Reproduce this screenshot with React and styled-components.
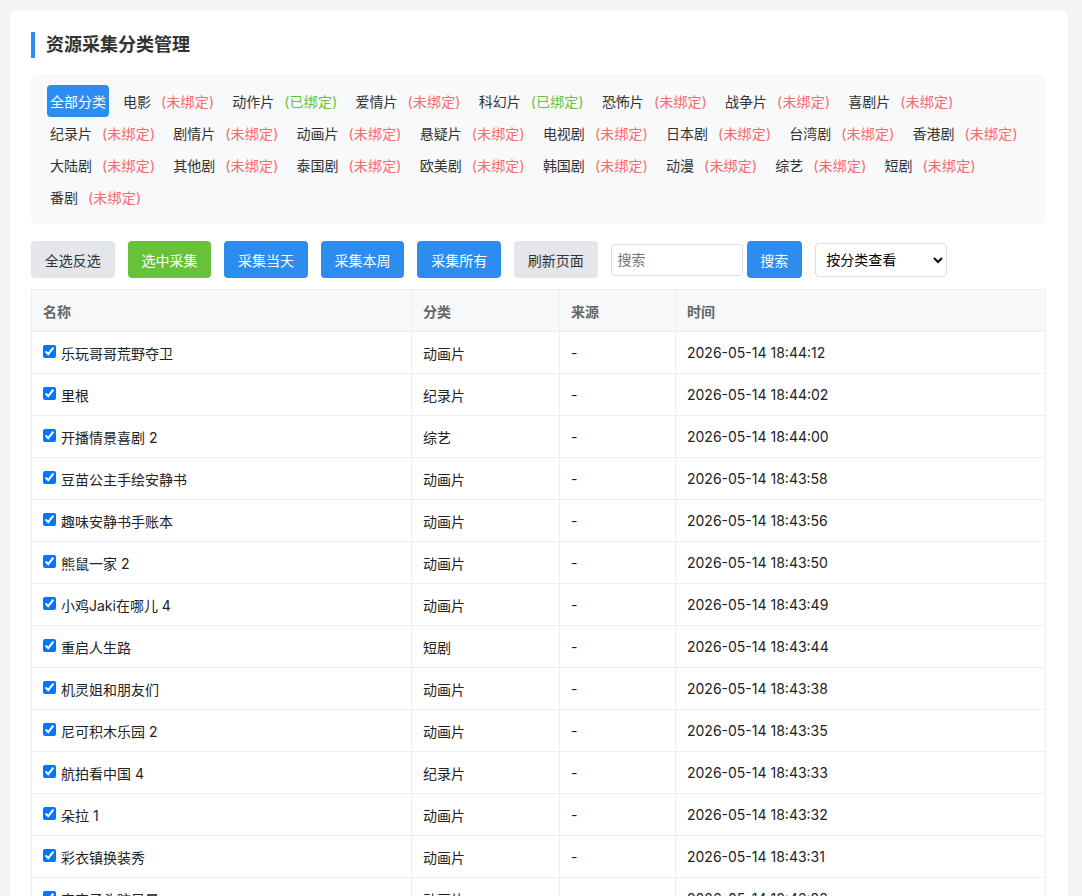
import React from 'react';
import styled, { createGlobalStyle } from 'styled-components';

const GlobalStyle = createGlobalStyle`
  * { box-sizing: border-box; }
  html, body { margin: 0; height: 896px; overflow: hidden; }
  body {
    background: #f3f4f6;
    font-family: Inter, "Noto Sans CJK SC", sans-serif;
    font-size: 14px;
    color: #333;
  }
`;

const Page = styled.div`
  padding: 10px 14px 0 10px;
`;
const Card = styled.div`
  background: #fff;
  border-radius: 8px;
  padding: 22px 23px 20px 21px;
`;
const Title = styled.h2`
  margin: 0 0 16px;
  height: 26px;
  line-height: 26px;
  padding-left: 11px;
  border-left: 4px solid #2d8cf0;
  font-size: 18px;
  font-weight: 700;
  color: #333;
`;
const FilterBox = styled.div`
  display: flex;
  flex-wrap: wrap;
  align-content: flex-start;
  background: #f8f9fa;
  border-radius: 6px;
  padding: 11px 12px 10px 16px;
  height: 150px;
`;
const FilterItem = styled.a`
  display: inline-flex;
  align-items: center;
  height: 32px;
  margin-right: ${(p) => (p.$active ? '11px' : '12px')};
  padding: 0 3px;
  border-radius: 4px;
  font-size: 14px;
  white-space: nowrap;
  color: ${(p) => (p.$active ? '#fff' : '#333')};
  background: ${(p) => (p.$active ? '#2d8cf0' : 'transparent')};
`;
const Status = styled.span`
  margin-left: 10px;
  letter-spacing: 0.2px;
  color: ${(p) => (p.$bound ? '#67c23a' : '#f56c6c')};
`;
const Toolbar = styled.div`
  display: flex;
  align-items: center;
  gap: 13px;
  margin: 17px 0 11px;
`;
const Button = styled.button`
  height: 37px;
  padding: 0 13.8px;
  border: 0;
  border-radius: 4px;
  font: inherit;
  white-space: nowrap;
  color: ${(p) => (p.$kind === 'gray' ? '#333' : '#fff')};
  background: ${(p) =>
    p.$kind === 'green' ? '#67c23a' : p.$kind === 'gray' ? '#e4e6eb' : '#2d8cf0'};
`;
const SearchGroup = styled.div`
  display: flex;
  align-items: center;
  gap: 4px;
`;
const SearchInput = styled.input`
  width: 132px;
  height: 32px;
  padding: 0 6px;
  border: 1px solid #ddd;
  border-radius: 4px;
  font: inherit;
  &::placeholder { color: #757575; }
`;
const Select = styled.select`
  width: 132px;
  height: 34px;
  padding: 0 6px;
  border: 1px solid #ddd;
  border-radius: 4px;
  background: #fff;
  color: #000;
  font: inherit;
`;
const Table = styled.table`
  width: 1014px;
  table-layout: fixed;
  border-collapse: collapse;
`;
const Th = styled.th`
  height: 42px;
  padding: 0 11px;
  border: 1px solid #eee;
  background: #f7f8fa;
  color: #666;
  font-size: 14px;
  font-weight: 700;
  text-align: left;
`;
const Td = styled.td`
  height: 42px;
  padding: 0 11px;
  border: 1px solid #eee;
  color: #222;
  white-space: nowrap;
`;
const NameCell = styled.label`
  display: flex;
  align-items: center;
  gap: 5px;
`;
const Check = styled.input`
  width: 13px;
  height: 13px;
  margin: -3px 0 0 0;
  accent-color: #0075ff;
`;

const categories = [
  ['电影', 0], ['动作片', 1], ['爱情片', 0], ['科幻片', 1], ['恐怖片', 0], ['战争片', 0], ['喜剧片', 0],
  ['纪录片', 0], ['剧情片', 0], ['动画片', 0], ['悬疑片', 0], ['电视剧', 0], ['日本剧', 0], ['台湾剧', 0], ['香港剧', 0],
  ['大陆剧', 0], ['其他剧', 0], ['泰国剧', 0], ['欧美剧', 0], ['韩国剧', 0], ['动漫', 0], ['综艺', 0], ['短剧', 0],
  ['番剧', 0],
];

const rows = [
  ['乐玩哥哥荒野夺卫', '动画片', '2026-05-14 18:44:12'],
  ['里根', '纪录片', '2026-05-14 18:44:02'],
  ['开播情景喜剧 2', '综艺', '2026-05-14 18:44:00'],
  ['豆苗公主手绘安静书', '动画片', '2026-05-14 18:43:58'],
  ['趣味安静书手账本', '动画片', '2026-05-14 18:43:56'],
  ['熊鼠一家 2', '动画片', '2026-05-14 18:43:50'],
  ['小鸡Jaki在哪儿 4', '动画片', '2026-05-14 18:43:49'],
  ['重启人生路', '短剧', '2026-05-14 18:43:44'],
  ['机灵姐和朋友们', '动画片', '2026-05-14 18:43:38'],
  ['尼可积木乐园 2', '动画片', '2026-05-14 18:43:35'],
  ['航拍看中国 4', '纪录片', '2026-05-14 18:43:33'],
  ['朵拉 1', '动画片', '2026-05-14 18:43:32'],
  ['彩衣镇换装秀', '动画片', '2026-05-14 18:43:31'],
  ['宝宝子头脑风暴', '动画片', '2026-05-14 18:43:23'],
];

export default function App() {
  return (
    <Page>
      <GlobalStyle />
      <Card>
        <Title>资源采集分类管理</Title>
        <FilterBox>
          <FilterItem $active>全部分类</FilterItem>
          {categories.map(([name, bound]) => (
            <FilterItem key={name}>
              {name}
              <Status $bound={bound}>{bound ? '(已绑定)' : '(未绑定)'}</Status>
            </FilterItem>
          ))}
        </FilterBox>
        <Toolbar>
          <Button $kind="gray">全选反选</Button>
          <Button $kind="green">选中采集</Button>
          <Button>采集当天</Button>
          <Button>采集本周</Button>
          <Button>采集所有</Button>
          <Button $kind="gray">刷新页面</Button>
          <SearchGroup>
            <SearchInput placeholder="搜索" />
            <Button>搜索</Button>
          </SearchGroup>
          <Select defaultValue="">
            <option value="">按分类查看</option>
          </Select>
        </Toolbar>
        <Table>
          <colgroup>
            <col width="380" />
            <col width="148" />
            <col width="116" />
            <col width="370" />
          </colgroup>
          <thead>
            <tr>
              <Th>名称</Th>
              <Th>分类</Th>
              <Th>来源</Th>
              <Th>时间</Th>
            </tr>
          </thead>
          <tbody>
            {rows.map(([name, type, time]) => (
              <tr key={name}>
                <Td>
                  <NameCell>
                    <Check type="checkbox" defaultChecked />
                    {name}
                  </NameCell>
                </Td>
                <Td>{type}</Td>
                <Td>-</Td>
                <Td>{time}</Td>
              </tr>
            ))}
          </tbody>
        </Table>
      </Card>
    </Page>
  );
}
